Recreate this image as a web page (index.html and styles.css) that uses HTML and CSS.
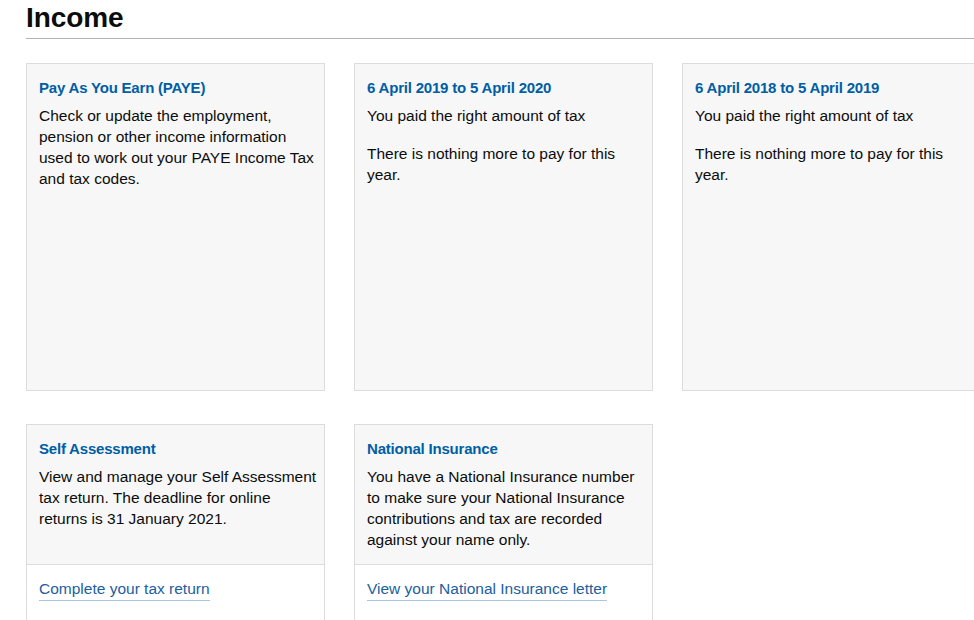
FILE: index.html
```html
<!DOCTYPE html>
<html lang="en">
<head>
<meta charset="utf-8">
<title>Income</title>
<link rel="stylesheet" href="styles.css">
</head>
<body>
<main class="page">
  <h1 class="heading">Income</h1>
  <div class="grid">
    <section class="card card--tall">
      <div class="card__body">
        <h2 class="card__title">Pay As You Earn (PAYE)</h2>
        <p class="card__text">Check or update the employment, pension or other income information used to work out your PAYE Income Tax and tax codes.</p>
      </div>
    </section>
    <section class="card card--tall">
      <div class="card__body">
        <h2 class="card__title">6 April 2019 to 5 April 2020</h2>
        <p class="card__text">You paid the right amount of tax</p>
        <p class="card__text card__text--gap">There is nothing more to pay for this year.</p>
      </div>
    </section>
    <section class="card card--tall">
      <div class="card__body">
        <h2 class="card__title">6 April 2018 to 5 April 2019</h2>
        <p class="card__text">You paid the right amount of tax</p>
        <p class="card__text card__text--gap">There is nothing more to pay for this year.</p>
      </div>
    </section>
    <section class="card">
      <div class="card__body">
        <h2 class="card__title">Self Assessment</h2>
        <p class="card__text">View and manage your Self Assessment tax return. The deadline for online returns is 31 January 2021.</p>
      </div>
      <div class="card__footer">
        <a class="card__link" href="#">Complete your tax return</a>
      </div>
    </section>
    <section class="card">
      <div class="card__body">
        <h2 class="card__title">National Insurance</h2>
        <p class="card__text">You have a National Insurance number to make sure your National Insurance contributions and tax are recorded against your name only.</p>
      </div>
      <div class="card__footer">
        <a class="card__link" href="#">View your National Insurance letter</a>
      </div>
    </section>
  </div>
</main>
</body>
</html>
```
FILE: styles.css
```css
html, body {
  margin: 0;
  padding: 0;
  overflow: hidden;
  background: #ffffff;
}

body {
  font-family: "Liberation Sans", Arial, sans-serif;
  color: #0b0c0c;
}

.page {
  padding: 0 0 0 26px;
  width: 1000px;
}

.heading {
  margin: 0;
  padding: 3px 0 5px;
  font-size: 28px;
  line-height: 30px;
  font-weight: 700;
  letter-spacing: -0.1px;
  border-bottom: 1px solid #b1b4b6;
}

.grid {
  display: grid;
  grid-template-columns: repeat(3, 299px);
  column-gap: 29px;
  row-gap: 33px;
  margin-top: 24px;
}

.card {
  display: flex;
  flex-direction: column;
  border: 1px solid #dcdcdc;
  background: #ffffff;
}

.card--tall {
  height: 328px;
  box-sizing: border-box;
  background: #f7f7f7;
}

.card__body {
  flex: 1;
  background: #f7f7f7;
  padding: 14px 6px 14px 12px;
}

.card__title {
  margin: 0 0 7px;
  font-size: 15px;
  line-height: 20px;
  font-weight: 700;
  color: #005ea5;
  letter-spacing: -0.2px;
}

.card__text {
  margin: 0;
  font-size: 15.5px;
  line-height: 21px;
}

.card__text--gap {
  margin-top: 17px;
}

.card__footer {
  border-top: 1px solid #dcdcdc;
  padding: 13px 12px 40px;
}

.card__link {
  font-size: 15.5px;
  line-height: 21px;
  color: #21609d;
  text-decoration: none;
  border-bottom: 1px solid #a9c7e2;
  padding-bottom: 3px;
}
```
